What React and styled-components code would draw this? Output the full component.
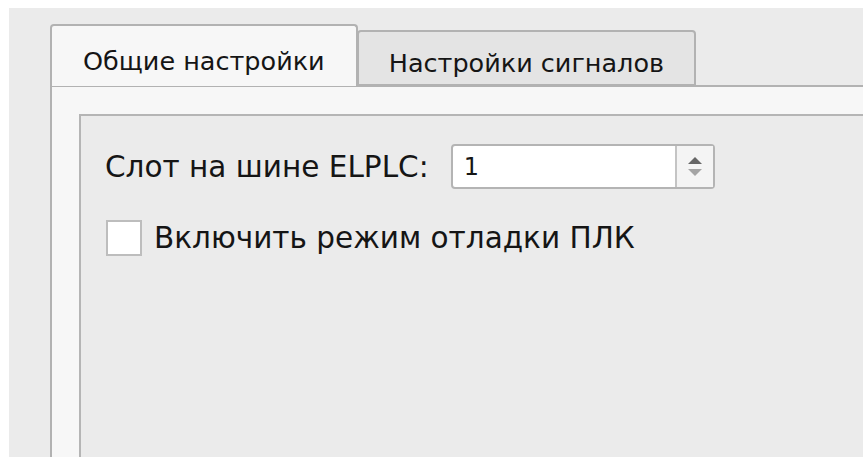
import React from 'react'
import styled, { createGlobalStyle } from 'styled-components'

const GlobalStyle = createGlobalStyle`
  html, body {
    margin: 0;
    padding: 0;
    background: #ffffff;
  }
  #root {
    width: 863px;
    height: 457px;
    overflow: hidden;
  }
`

const Window = styled.div`
  margin: 8px 0 0 9px;
  height: 449px;
  background: #ebebeb;
  padding: 17px 0 0 41px;
  box-sizing: border-box;
  font-family: "DejaVu Sans", Tahoma, sans-serif;
  color: #151515;
  overflow: hidden;
`

const TabBar = styled.div`
  display: flex;
  align-items: flex-end;
  height: 61px;
  position: relative;
  z-index: 1;
`

const Tab = styled.div`
  box-sizing: border-box;
  height: ${p => (p.$active ? '62px' : '56px')};
  padding: ${p => (p.$active ? '21px 31px 0' : '17px 30px 0')};
  margin-left: ${p => (p.$active ? '0' : '-1px')};
  background: ${p => (p.$active ? '#f7f7f7' : '#e4e4e4')};
  border: 2px solid #b2b2b2;
  border-bottom: ${p => (p.$active ? 'none' : '2px solid #b2b2b2')};
  border-radius: 4px 4px 0 0;
  font-size: 25.5px;
  line-height: 28px;
  white-space: nowrap;
`

const Pane = styled.div`
  background: #f7f7f7;
  border-top: 2px solid #b2b2b2;
  border-left: 2px solid #b2b2b2;
  margin-top: -1px;
  padding: 27px 0 0 27px;
  height: 400px;
`

const GroupFrame = styled.div`
  background: #ebebeb;
  border-top: 2px solid #b5b5b5;
  border-left: 2px solid #b5b5b5;
  height: 400px;
  padding: 28px 0 0 24px;
  display: flex;
  flex-direction: column;
  gap: 31px;
`

const Row = styled.div`
  display: flex;
  align-items: center;
  font-size: 29.5px;
`

const Label = styled.span`
  white-space: nowrap;
`

const SpinBox = styled.div`
  margin-left: 22px;
  width: 264px;
  height: 45px;
  box-sizing: border-box;
  display: flex;
  background: #ffffff;
  border: 2px solid #b4b4b4;
  border-radius: 4px;
`

const SpinValue = styled.div`
  flex: 1;
  display: flex;
  align-items: center;
  padding-left: 11px;
  font-size: 24px;
`

const SpinButtons = styled.div`
  width: 36px;
  border-left: 2px solid #c4c4c4;
  background: #f4f4f4;
  display: flex;
  align-items: center;
  justify-content: center;
`

const CheckBox = styled.span`
  width: 36px;
  height: 36px;
  box-sizing: border-box;
  background: #ffffff;
  border: 2px solid #bdbdbd;
  margin: 0 12px 0 1px;
  flex-shrink: 0;
`

const Arrows = () => (
  <svg width="16" height="22" viewBox="0 0 16 22">
    <path d="M1 8 L8 1 L15 8 Z" fill="#666666" />
    <path d="M1 13 L15 13 L8 20 Z" fill="#a4a4a4" />
  </svg>
)

export default function App() {
  return (
    <>
      <GlobalStyle />
      <Window>
        <TabBar>
          <Tab $active>Общие настройки</Tab>
          <Tab>Настройки сигналов</Tab>
        </TabBar>
        <Pane>
          <GroupFrame>
            <Row>
              <Label>Слот на шине ELPLC:</Label>
              <SpinBox>
                <SpinValue>1</SpinValue>
                <SpinButtons>
                  <Arrows />
                </SpinButtons>
              </SpinBox>
            </Row>
            <Row>
              <CheckBox />
              <Label>Включить режим отладки ПЛК</Label>
            </Row>
          </GroupFrame>
        </Pane>
      </Window>
    </>
  )
}
